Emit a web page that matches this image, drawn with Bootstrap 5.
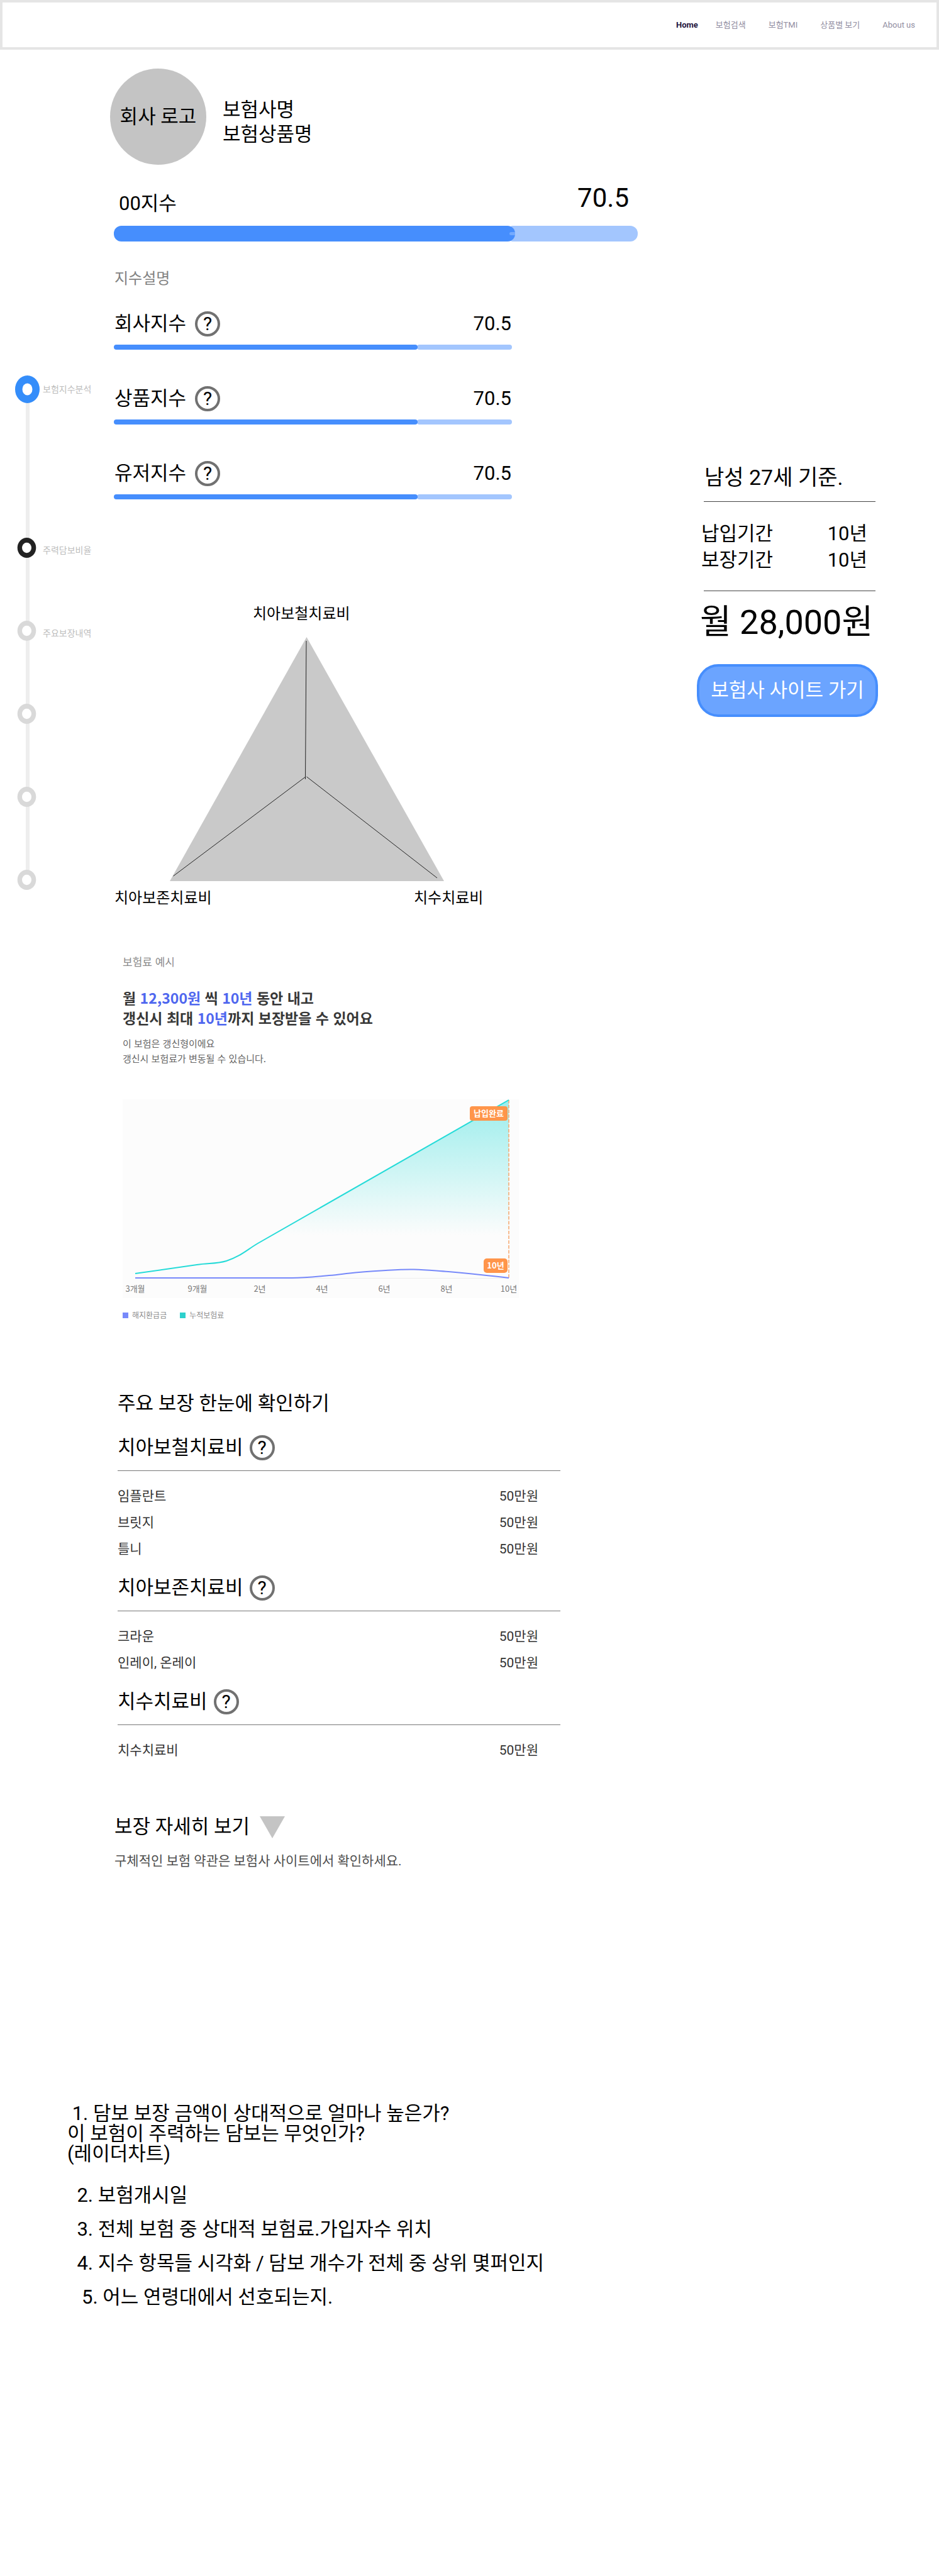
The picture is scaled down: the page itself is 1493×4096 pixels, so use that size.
<!DOCTYPE html>
<html lang="ko">
<head>
<meta charset="utf-8">
<meta name="viewport" content="width=device-width, initial-scale=1">
<title>보험상품 상세</title>
<link href="https://cdn.jsdelivr.net/npm/bootstrap@5.3.0/dist/css/bootstrap.min.css" rel="stylesheet">
<style>
  :root { --brand: #468efd; --brand-soft: #a3c6fe; }
  body { font-family: Roboto, "Noto Sans CJK KR", sans-serif; font-size: 31px; line-height: 40px; color: #000; background: #fff; }
  .cjk { font-family: "Noto Sans CJK KR", sans-serif; }

  /* top bar */
  .topbar { height: 79px; border: 4px solid #e5e5e5; padding: 0 34px 0 0; }
  .topbar .nav { gap: 36px; }
  .topbar .nav-item:first-child { margin-right: -8px; }
  .topbar .nav-link { padding: 0; font-size: 13px; line-height: 20px; color: #918da1; }
  .topbar .nav-link.active { font-weight: 700; color: #1e1640; }

  /* step rail */
  .rail { flex: 0 0 175px; padding: 518px 0 0 24px; }
  .rail ol { background: linear-gradient(#eee, #eee) no-repeat 17px 20px / 6px calc(100% - 40px); }
  .rail li { height: 132px; }
  .rail li:first-child { height: 258px; }
  .rail li:last-child { height: 32px; }
  .rail a { gap: 5px; font-size: 14px; line-height: 20px; color: #bdbdbd; text-decoration: none; }
  .rail .dot { width: 39px; flex: none; }

  .content { flex: 1 1 0; max-width: 839px; min-width: 0; padding-top: 30px; }
  .inset { padding-left: 6px; }

  .logo-disc { width: 153px; height: 153px; background: #c4c4c4; }
  .company { padding: 16px 0 0 26px; line-height: 39px; }

  .score-head { margin: 24px 0 16px; padding: 0 14px 0 8px; line-height: 38px; }
  .score-value { font-size: 42px; line-height: 57px; }

  .meter { height: 25px; }
  .meter-on { position: relative; z-index: 1; background: var(--brand); border-radius: 12px; }
  .meter-on::after { content: ""; position: absolute; right: 0; top: 10px; width: 9px; height: 5px; border-radius: 3px 0 0 3px; background: #74aafe; }
  .meter-off { flex: 1; margin-left: -8px; background: var(--brand-soft); border-radius: 4px 12px 12px 4px; }
  .meter-sm { height: 8px; }
  .meter-sm .meter-on, .meter-sm .meter-off { border-radius: 4px; }
  .meter-sm .meter-on::after { display: none; }
  .meter-sm .meter-off { margin-left: -1px; }

  .hint { margin-top: 41px; font-size: 24px; line-height: 36px; color: #828282; padding-left: 1px; }
  .metrics { width: 633px; max-width: 100%; margin-top: 34px; }
  .metric + .metric { margin-top: 58px; }
  .metric-head { margin-bottom: 13px; padding: 0 1px; gap: 14px; }
  .help { width: 40px; height: 40px; border: 4px solid #717171; border-radius: 50%; background: none; padding: 0; font-size: 30px; line-height: 32px; font-weight: 400; color: #000; }

  .radar { display: block; margin-top: 161px; width: 590px; max-width: 100%; }
  .radar text { font-size: 24px; }

  .example { padding-left: 20px; }
  .eyebrow { margin: 71px 0 28px; font-size: 17px; line-height: 26px; color: #8c8c8c; }
  .headline { margin: 0 0 13px; font-size: 23px; line-height: 32px; font-weight: 700; color: #383838; }
  .headline em { font-style: normal; color: #4f67ef; }
  .sub { margin: 0 0 53px; font-size: 15px; line-height: 24px; color: #666; }
  .chart { width: 630px; max-width: 100%; }
  .chart text { font-size: 13px; fill: #777; text-anchor: middle; }
  .chart .flag { font-weight: 700; fill: #fff; }
  .legend { margin-top: 18px; gap: 21px; font-size: 12px; line-height: 18px; color: #8c8c8c; }
  .legend i { width: 9px; height: 9px; margin-right: 6px; }

  .cover { width: 716px; max-width: 100%; padding-left: 12px; }
  .cover h2 { margin: 112px 0 30px; font-size: 31px; line-height: 40px; font-weight: 400; }
  .cover table { width: 100%; margin-bottom: 21px; font-size: 21px; line-height: 42px; color: #333; }
  .cover caption { caption-side: top; padding: 0 0 16px; margin-bottom: 19px; border-bottom: 1px solid #777; font-size: 31px; line-height: 40px; color: #000; }
  .cover caption span { gap: 10px; }
  .cover th { font-weight: 400; padding: 0; }
  .cover td { text-align: right; padding: 0 35px 0 0; }

  .more { margin-top: 81px; gap: 16px; border: 0; background: none; padding: 0 0 0 7px; color: #000; }
  .more-note { margin: 18px 0 0; padding-left: 7px; font-size: 21px; line-height: 32px; color: #4f4f4f; }

  /* quote panel */
  .quote { flex: 0 0 288px; margin: 658px 97px 0 auto; }
  .quote h2 { margin: 0 4px 0 11px; padding: 0 0 16px 1px; border-bottom: 1px solid #444; font-size: 34px; line-height: 44px; font-weight: 400; }
  .quote dl { margin: 30px 0 27px; padding: 0 17px 0 7px; line-height: 42px; }
  .quote dt, .quote dd { margin: 0; font-weight: 400; }
  .quote .price { margin: 0 0 33px; white-space: nowrap; font-size: 54px; line-height: 66px; padding-left: 5px; }
  .quote hr { margin: 0 4px 17px 11px; border-top: 1px solid #444; opacity: 1; }
  .quote .go { width: 100%; height: 84px; border: 4px solid var(--brand); border-radius: 34px; background: #6ba4ff; color: #fff; padding: 0; font-size: 31px; line-height: 40px; white-space: nowrap; }

  .notes { margin: 370px 0 0; padding: 0 0 0 107px; line-height: 54px; }
  .notes li:first-child { line-height: 32px; margin-bottom: 23px; }
</style>
</head>
<body>
<header class="topbar d-flex align-items-center justify-content-end">
  <nav aria-label="주 메뉴">
    <ul class="nav">
      <li class="nav-item"><a class="nav-link active" href="#" aria-current="page">Home</a></li>
      <li class="nav-item"><a class="nav-link" href="#">보험검색</a></li>
      <li class="nav-item"><a class="nav-link" href="#">보험TMI</a></li>
      <li class="nav-item"><a class="nav-link" href="#">상품별 보기</a></li>
      <li class="nav-item"><a class="nav-link" href="#">About us</a></li>
    </ul>
  </nav>
</header>

<main>
  <div class="d-flex align-items-start">
    <nav class="rail" aria-label="페이지 단계">
      <ol class="list-unstyled mb-0">
        <li><a class="d-flex align-items-center" href="#score"><svg class="dot" height="44" viewBox="0 0 39 44"><ellipse cx="19.5" cy="22" rx="19.5" ry="22" fill="#348dfa"/><ellipse cx="19.5" cy="22" rx="8" ry="9.5" fill="#fff"/></svg>보험지수분석</a></li>
        <li><a class="d-flex align-items-center" href="#ratio"><svg class="dot" height="32" viewBox="0 0 39 32"><ellipse cx="18.5" cy="16" rx="14.8" ry="16" fill="#222"/><ellipse cx="18.5" cy="16" rx="7.5" ry="8.2" fill="#fff"/></svg><span class="pt-2">주력담보비율</span></a></li>
        <li><a class="d-flex align-items-center" href="#cover"><svg class="dot" height="32" viewBox="0 0 39 32"><ellipse cx="18.5" cy="16" rx="14.8" ry="16" fill="#d9d9d9"/><ellipse cx="18.5" cy="16" rx="7.5" ry="8.2" fill="#fff"/></svg><span class="pt-2">주요보장내역</span></a></li>
        <li class="d-flex align-items-start"><svg class="dot" height="32" viewBox="0 0 39 32"><ellipse cx="18.5" cy="16" rx="14.8" ry="16" fill="#d9d9d9"/><ellipse cx="18.5" cy="16" rx="7.5" ry="8.2" fill="#fff"/></svg></li>
        <li class="d-flex align-items-start"><svg class="dot" height="32" viewBox="0 0 39 32"><ellipse cx="18.5" cy="16" rx="14.8" ry="16" fill="#d9d9d9"/><ellipse cx="18.5" cy="16" rx="7.5" ry="8.2" fill="#fff"/></svg></li>
        <li class="d-flex align-items-start"><svg class="dot" height="32" viewBox="0 0 39 32"><ellipse cx="18.5" cy="16" rx="14.8" ry="16" fill="#d9d9d9"/><ellipse cx="18.5" cy="16" rx="7.5" ry="8.2" fill="#fff"/></svg></li>
      </ol>
    </nav>

    <div class="content">
      <div class="d-flex align-items-center">
        <div class="logo-disc rounded-circle d-flex align-items-center justify-content-center">회사 로고</div>
        <div class="company">보험사명<br>보험상품명</div>
      </div>

      <section id="score" class="inset">
        <div class="score-head d-flex justify-content-between align-items-end">
          <span>00지수</span><span class="score-value">70.5</span>
        </div>
        <div class="meter d-flex"><div class="meter-on" style="width:76.6%"></div><div class="meter-off"></div></div>
        <div class="hint">지수설명</div>

        <div class="metrics">
          <div class="metric">
            <div class="metric-head d-flex align-items-center"><span>회사지수</span><button type="button" class="help">?</button><span class="ms-auto">70.5</span></div>
            <div class="meter meter-sm d-flex"><div class="meter-on" style="width:76.3%"></div><div class="meter-off"></div></div>
          </div>
          <div class="metric">
            <div class="metric-head d-flex align-items-center"><span>상품지수</span><button type="button" class="help">?</button><span class="ms-auto">70.5</span></div>
            <div class="meter meter-sm d-flex"><div class="meter-on" style="width:76.3%"></div><div class="meter-off"></div></div>
          </div>
          <div class="metric">
            <div class="metric-head d-flex align-items-center"><span>유저지수</span><button type="button" class="help">?</button><span class="ms-auto">70.5</span></div>
            <div class="meter meter-sm d-flex"><div class="meter-on" style="width:76.3%"></div><div class="meter-off"></div></div>
          </div>
        </div>
      </section>

      <section id="ratio" class="inset">
        <svg class="radar" viewBox="0 0 590 490">
          <polygon points="306.5,58 525,446 89,446" fill="#c9c9c9"/>
          <g stroke="#222" stroke-width="1" fill="none">
            <path d="M306 64 304.500 284"/>
            <path d="M305 280 94.500 438"/>
            <path d="M306.500 280 514 441"/>
          </g>
          <text x="221" y="29">치아보철치료비</text>
          <text x="1" y="481">치아보존치료비</text>
          <text x="477" y="481">치수치료비</text>
        </svg>
      </section>

      <section class="example cjk">
        <p class="eyebrow">보험료 예시</p>
        <h2 class="headline">월 <em>12,300원</em> 씩 <em>10년</em> 동안 내고<br>갱신시 최대 <em>10년</em>까지 보장받을 수 있어요</h2>
        <p class="sub">이 보험은 갱신형이에요<br>갱신시 보험료가 변동될 수 있습니다.</p>
        <svg class="chart d-block" viewBox="0 0 630 316">
          <defs>
            <linearGradient id="fade" gradientUnits="userSpaceOnUse" x1="0" y1="0" x2="0" y2="216">
              <stop offset="0" stop-color="#25dbd8" stop-opacity=".45"/>
              <stop offset="1" stop-color="#25dbd8" stop-opacity="0"/>
            </linearGradient>
          </defs>
          <rect width="630" height="316" fill="#fcfcfc"/>
          <path d="M20 284.500H614" stroke="#eee"/>
          <path d="M215 229 614 1V284H215Z" fill="url(#fade)"/>
          <path d="M614 1V284" stroke="#f5a56b" stroke-width="1.500" stroke-dasharray="5.500 2.200"/>
          <path d="M20 277 118 263C138 260 148 262 165 257 187 250 198 239 215 229L614 1" fill="none" stroke="#25dbd8" stroke-width="2"/>
          <path d="M20 284H269C290 284 308 282 328 280 345 279 352 277 370 275.500 400 273 440 270 463 270.500 485 271 500 273 518 274 550 277 590 281 614 284" fill="none" stroke="#7789fa" stroke-width="2"/>
          <rect x="552" y="11" width="60" height="23" rx="4" fill="#ff954a"/>
          <rect x="574" y="253" width="38" height="23" rx="5" fill="#ff954a"/>
          <text class="flag" x="582" y="27">납입완료</text>
          <text class="flag" x="593" y="269">10년</text>
          <text x="20" y="306">3개월</text>
          <text x="119" y="306">9개월</text>
          <text x="218" y="306">2년</text>
          <text x="317" y="306">4년</text>
          <text x="416" y="306">6년</text>
          <text x="515" y="306">8년</text>
          <text x="614" y="306">10년</text>
        </svg>
        <div class="legend d-flex">
          <span class="d-flex align-items-center"><i style="background:#7789fa"></i>해지환급금</span>
          <span class="d-flex align-items-center"><i style="background:#2dd0cc"></i>누적보험료</span>
        </div>
      </section>

      <section id="cover" class="cover">
        <h2>주요 보장 한눈에 확인하기</h2>
        <table>
          <caption><span class="d-flex align-items-center">치아보철치료비<button type="button" class="help">?</button></span></caption>
          <tbody>
            <tr><th scope="row">임플란트</th><td>50만원</td></tr>
            <tr><th scope="row">브릿지</th><td>50만원</td></tr>
            <tr><th scope="row">틀니</th><td>50만원</td></tr>
          </tbody>
        </table>
        <table>
          <caption><span class="d-flex align-items-center">치아보존치료비<button type="button" class="help">?</button></span></caption>
          <tbody>
            <tr><th scope="row">크라운</th><td>50만원</td></tr>
            <tr><th scope="row">인레이, 온레이</th><td>50만원</td></tr>
          </tbody>
        </table>
        <table class="mb-0">
          <caption><span class="d-flex align-items-center">치수치료비<button type="button" class="help">?</button></span></caption>
          <tbody>
            <tr><th scope="row">치수치료비</th><td>50만원</td></tr>
          </tbody>
        </table>
      </section>

      <button type="button" class="more d-flex align-items-center">보장 자세히 보기<svg width="40" height="35" viewBox="0 0 40 35"><path d="M0 0H40L20 35Z" fill="#c4c4c4"/></svg></button>
      <p class="more-note">구체적인 보험 약관은 보험사 사이트에서 확인하세요.</p>
    </div>

    <aside class="quote">
      <h2>남성 27세 기준.</h2>
      <dl>
        <div class="d-flex justify-content-between"><dt>납입기간</dt><dd>10년</dd></div>
        <div class="d-flex justify-content-between"><dt>보장기간</dt><dd>10년</dd></div>
      </dl>
      <hr>
      <p class="price">월 28,000원</p>
      <button type="button" class="go">보험사 사이트 가기</button>
    </aside>
  </div>

  <ol class="notes list-unstyled">
    <li>&nbsp;1. 담보 보장 금액이 상대적으로 얼마나 높은가?<br>이 보험이 주력하는 담보는 무엇인가?<br>(레이더차트)</li>
    <li>&nbsp; 2. 보험개시일</li>
    <li>&nbsp; 3. 전체 보험 중 상대적 보험료.가입자수 위치</li>
    <li>&nbsp; 4. 지수 항목들 시각화 / 담보 개수가 전체 중 상위 몇퍼인지</li>
    <li>&nbsp;&nbsp; 5. 어느 연령대에서 선호되는지.</li>
  </ol>
</main>
<script src="https://cdn.jsdelivr.net/npm/bootstrap@5.3.0/dist/js/bootstrap.bundle.min.js"></script>
</body>
</html>
